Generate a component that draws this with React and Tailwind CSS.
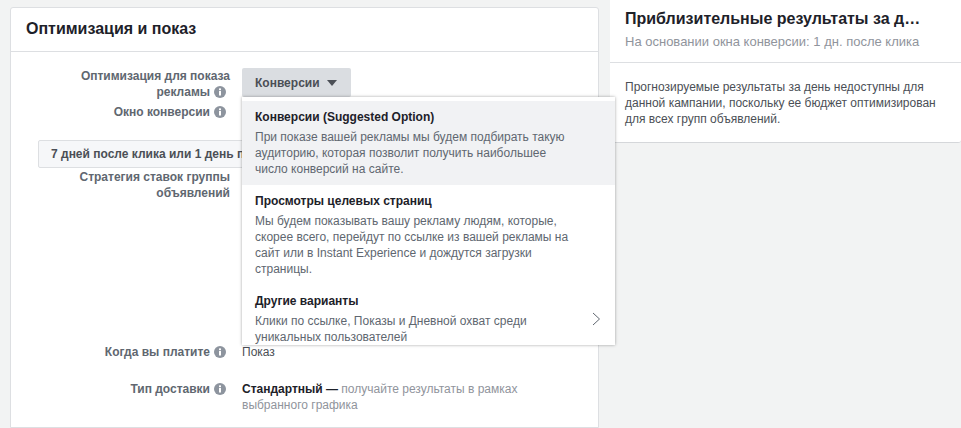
function Info() {
    return (
        <svg width="12" height="12" viewBox="0 0 12 12" className="shrink-0">
            <circle cx="6" cy="6" r="6" fill="#8d949e" />
            <rect x="5" y="5" width="2" height="4.5" fill="#fff" />
            <rect x="5" y="2.4" width="2" height="1.8" fill="#fff" />
        </svg>
    );
}

function Option({ title, children, active }) {
    return (
        <div className={`px-[13px] pt-[8px] ${active ? 'bg-[#f1f2f4] h-[84px]' : ''}`}>
            <div className="text-[12px] leading-[16px] font-bold text-[#1d2129]">{title}</div>
            <div className="mt-[4px] text-[12px] leading-[16px] text-[#606770]">{children}</div>
        </div>
    );
}

export default function App() {
    return (
        <div className="relative w-[961px] h-[428px] overflow-hidden bg-[#f2f3f3] font-['Liberation_Sans',Arial,sans-serif] flex items-start">
            {/* Left card */}
            <div className="ml-[10px] mt-[7px] w-[589px] h-[421px] shrink-0 bg-white border border-[#dddfe2] rounded-t-[3px]">
                <div className="h-[44px] pl-[16px] pb-[1px] flex items-center border-b border-[#dddfe2] text-[16px] font-bold text-[#1d2129]">
                    <span className="-ml-[1px]">Оптимизация и показ</span>
                </div>

                <div className="relative pt-[16px] text-[12px] leading-[16px]">
                    <div className="flex">
                        <div className="w-[219px] text-right font-bold text-[#606770]">
                            <div>Оптимизация для показа</div>
                            <div className="flex justify-end items-center gap-[4px] pr-[4px]">рекламы <Info /></div>
                        </div>
                        <div className="ml-[12px]">
                            <div className="h-[29px] w-[109px] rounded-[2px] bg-[#dadde1] flex items-center pl-[13px] font-bold text-[#4b4f56]">
                                Конверсии
                                <span className="ml-[7px] w-0 h-0 border-x-[5px] border-x-transparent border-t-[6px] border-t-[#4b4f56]" />
                            </div>
                        </div>
                    </div>

                    <div className="flex justify-end items-center gap-[4px] w-[215px] mt-[4px] font-bold text-[#606770]">
                        Окно конверсии <Info />
                    </div>

                    <div className="ml-[27px] mt-[20px] w-[300px] h-[28px] bg-[#f6f7f9] border border-[#dddfe2] rounded-[2px] flex items-center pl-[12px] font-bold text-[#4b4f56] whitespace-nowrap">
                        7 дней после клика или 1 день п
                    </div>

                    <div className="w-[219px] mt-[1px] text-right font-bold text-[#606770]">
                        <div>Стратегия ставок группы</div>
                        <div>объявлений</div>
                    </div>

                    <div className="flex items-center mt-[143px]">
                        <div className="w-[215px] flex justify-end items-center gap-[4px] font-bold text-[#606770]">
                            Когда вы платите <Info />
                        </div>
                        <div className="ml-[16px] text-[#4b4f56]">Показ</div>
                    </div>

                    <div className="flex mt-[21px]">
                        <div className="w-[215px] h-[16px] flex justify-end items-center gap-[4px] font-bold text-[#606770]">
                            Тип доставки <Info />
                        </div>
                        <div className="ml-[16px] w-[300px] text-[#90949c]">
                            <span className="font-bold text-[#1d2129]">Стандартный —</span> получайте результаты в рамках<br />
                            выбранного графика
                        </div>
                    </div>
                </div>
            </div>

            {/* Right card */}
            <div className="ml-[11px] w-[351px] h-[143px] shrink-0 bg-white border-b border-[#d5d7da] rounded-br-[3px]">
                <div className="h-[63px] pl-[15px] pt-[10px] border-b border-[#dddfe2]">
                    <div className="text-[16px] leading-[18px] font-bold text-[#1d2129]">Приблизительные результаты за д…</div>
                    <div className="mt-[6px] text-[13px] leading-[16px] text-[#90949c]">На основании окна конверсии: 1 дн. после клика</div>
                </div>
                <div className="pl-[15px] pt-[16px] w-[335px] text-[12px] leading-[16px] text-[#4b4f56]">
                    Прогнозируемые результаты за день недоступны для данной кампании, поскольку ее бюджет оптимизирован для всех групп объявлений.
                </div>
            </div>

            {/* Dropdown menu */}
            <div className="absolute left-[242px] top-[97px] w-[373px] h-[248px] bg-white pt-[4px] overflow-hidden shadow-[0_0_3px_rgba(0,0,0,0.35)]">
                <Option title="Конверсии (Suggested Option)" active>
                    При показе вашей рекламы мы будем подбирать такую<br />
                    аудиторию, которая позволит получить наибольшее<br />
                    число конверсий на сайте.
                </Option>
                <Option title="Просмотры целевых страниц">
                    Мы будем показывать вашу рекламу людям, которые,<br />
                    скорее всего, перейдут по ссылке из вашей рекламы на<br />
                    сайт или в Instant Experience и дождутся загрузки<br />
                    страницы.
                </Option>
                <div className="mt-[8px]">
                    <Option title="Другие варианты">
                        Клики по ссылке, Показы и Дневной охват среди<br />
                        уникальных пользователей
                    </Option>
                </div>
                <svg width="9" height="14" viewBox="0 0 9 14" className="absolute left-[350px] top-[215px]">
                    <path d="M1 1l6.5 6L1 13" fill="none" stroke="#606770" strokeWidth="1" />
                </svg>
            </div>
        </div>
    );
}
